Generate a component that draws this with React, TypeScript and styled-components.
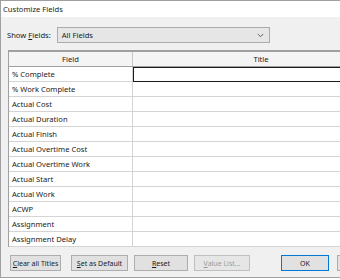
import styled, {createGlobalStyle, css} from "styled-components";

const GlobalStyle = createGlobalStyle`
    html, body {
        margin: 0;
        padding: 0;
        overflow: hidden;
        background: #ffffff;
    }

    body {
        width: 340px;
        height: 280px;
        font-family: "Segoe UI", "Noto Sans", sans-serif;
        font-size: 7.6px;
        color: #1a1a1a;
    }
`

const StyledWindow = styled.div`
    display: flex;
    flex-direction: column;

    width: 390px;
    height: 278px;

    border-top: 1px solid #a0a0a0;
    border-left: 1px solid #a0a0a0;
    border-bottom: 1px solid #a0a0a0;
    box-sizing: border-box;
`

const StyledTitleBar = styled.div`
    display: flex;
    align-items: center;

    height: 16px;
    padding-left: 2px;

    background-color: #fff;
`

const StyledBody = styled.div`
    display: flex;
    flex-direction: column;
    flex: 1;

    padding: 10px 0 0 6px;

    background-color: #f0f0f0;
`

const StyledShowRow = styled.div`
    display: flex;
    flex-direction: row;
    align-items: center;

    height: 16px;
    gap: 6px;
`

const StyledDropdown = styled.div`
    display: flex;
    flex-direction: row;
    justify-content: space-between;
    align-items: center;

    box-sizing: border-box;
    width: 213px;
    height: 16px;
    padding: 0 5px 0 4px;

    background-color: #e6e6e6;
    border: 1px solid #acacac;
`

const StyledTable = styled.div`
    display: flex;
    flex-direction: column;

    margin: 7px 0 0 1px;

    border-top: 2px solid #a0a0a0;
    border-left: 1px solid #a0a0a0;
    background-color: #fff;
`

const StyledRow = styled.div<{ $header?: boolean }>`
    display: grid;
    grid-template-columns: 124px 1fr;

    height: 15px;

    ${props => props.$header && css`
        height: 14px;
        background-color: #f4f4f4;
        border-bottom: 1px solid #a0a0a0;
    `}
`

const StyledCell = styled.div<{ $header?: boolean, $selected?: boolean }>`
    display: flex;
    align-items: center;

    box-sizing: border-box;
    padding-left: 3px;
    white-space: nowrap;

    border-right: 1px solid #d4d4d4;
    border-bottom: 1px solid #d4d4d4;

    ${props => props.$header && css`
        justify-content: center;
        padding-left: 0;
        border-bottom: none;
        border-right-color: #c8c8c8;
    `}

    ${props => props.$selected && css`
        border: 1px solid #1a1a1a;
    `}
`

const StyledButtonRow = styled.div`
    display: flex;
    flex-direction: row;
    align-items: center;

    margin: 8px 0 0 3px;
`

const StyledButton = styled.div<{ $width: number, $gap: number, $primary?: boolean, $disabled?: boolean }>`
    display: flex;
    justify-content: center;
    align-items: center;

    box-sizing: border-box;
    width: ${props => props.$width}px;
    height: 16px;
    margin-left: ${props => props.$gap}px;

    font-size: 7px;
    white-space: nowrap;

    background-color: #e1e1e1;
    border: 1px solid #adadad;

    ${props => props.$primary && css`
        border-color: #0078d7;
    `}

    ${props => props.$disabled && css`
        color: #9a9a9a;
        background-color: #e6e6e6;
        border-color: #bfbfbf;
    `}
`

const fields = [
	"% Complete",
	"% Work Complete",
	"Actual Cost",
	"Actual Duration",
	"Actual Finish",
	"Actual Overtime Cost",
	"Actual Overtime Work",
	"Actual Start",
	"Actual Work",
	"ACWP",
	"Assignment",
	"Assignment Delay",
]

const ChevronIcon = () => (
	<svg width="7" height="5" viewBox="0 0 7 5">
		<polyline points="0.8,1 3.5,3.7 6.2,1" fill="none" stroke="#555" strokeWidth="0.9"/>
	</svg>
)

export default function App() {
	return (
		<>
			<GlobalStyle/>
			<StyledWindow>
				<StyledTitleBar>Customize Fields</StyledTitleBar>
				<StyledBody>
					<StyledShowRow>
						<span>Show <u>F</u>ields:</span>
						<StyledDropdown>
							<span>All Fields</span>
							<ChevronIcon/>
						</StyledDropdown>
					</StyledShowRow>

					<StyledTable>
						<StyledRow $header>
							<StyledCell $header>Field</StyledCell>
							<StyledCell $header>Title</StyledCell>
						</StyledRow>
						{fields.map((field, index) => (
							<StyledRow key={field}>
								<StyledCell>{field}</StyledCell>
								<StyledCell $selected={index === 0}/>
							</StyledRow>
						))}
					</StyledTable>

					<StyledButtonRow>
						<StyledButton $width={51} $gap={0}><span><u>C</u>lear all Titles</span></StyledButton>
						<StyledButton $width={57} $gap={10}><span><u>S</u>et as Default</span></StyledButton>
						<StyledButton $width={54} $gap={6}><span><u>R</u>eset</span></StyledButton>
						<StyledButton $width={56} $gap={6} $disabled><span><u>V</u>alue List...</span></StyledButton>
						<StyledButton $width={48} $gap={31} $primary>OK</StyledButton>
						<StyledButton $width={48} $gap={8}/>
					</StyledButtonRow>
				</StyledBody>
			</StyledWindow>
		</>
	)
}
